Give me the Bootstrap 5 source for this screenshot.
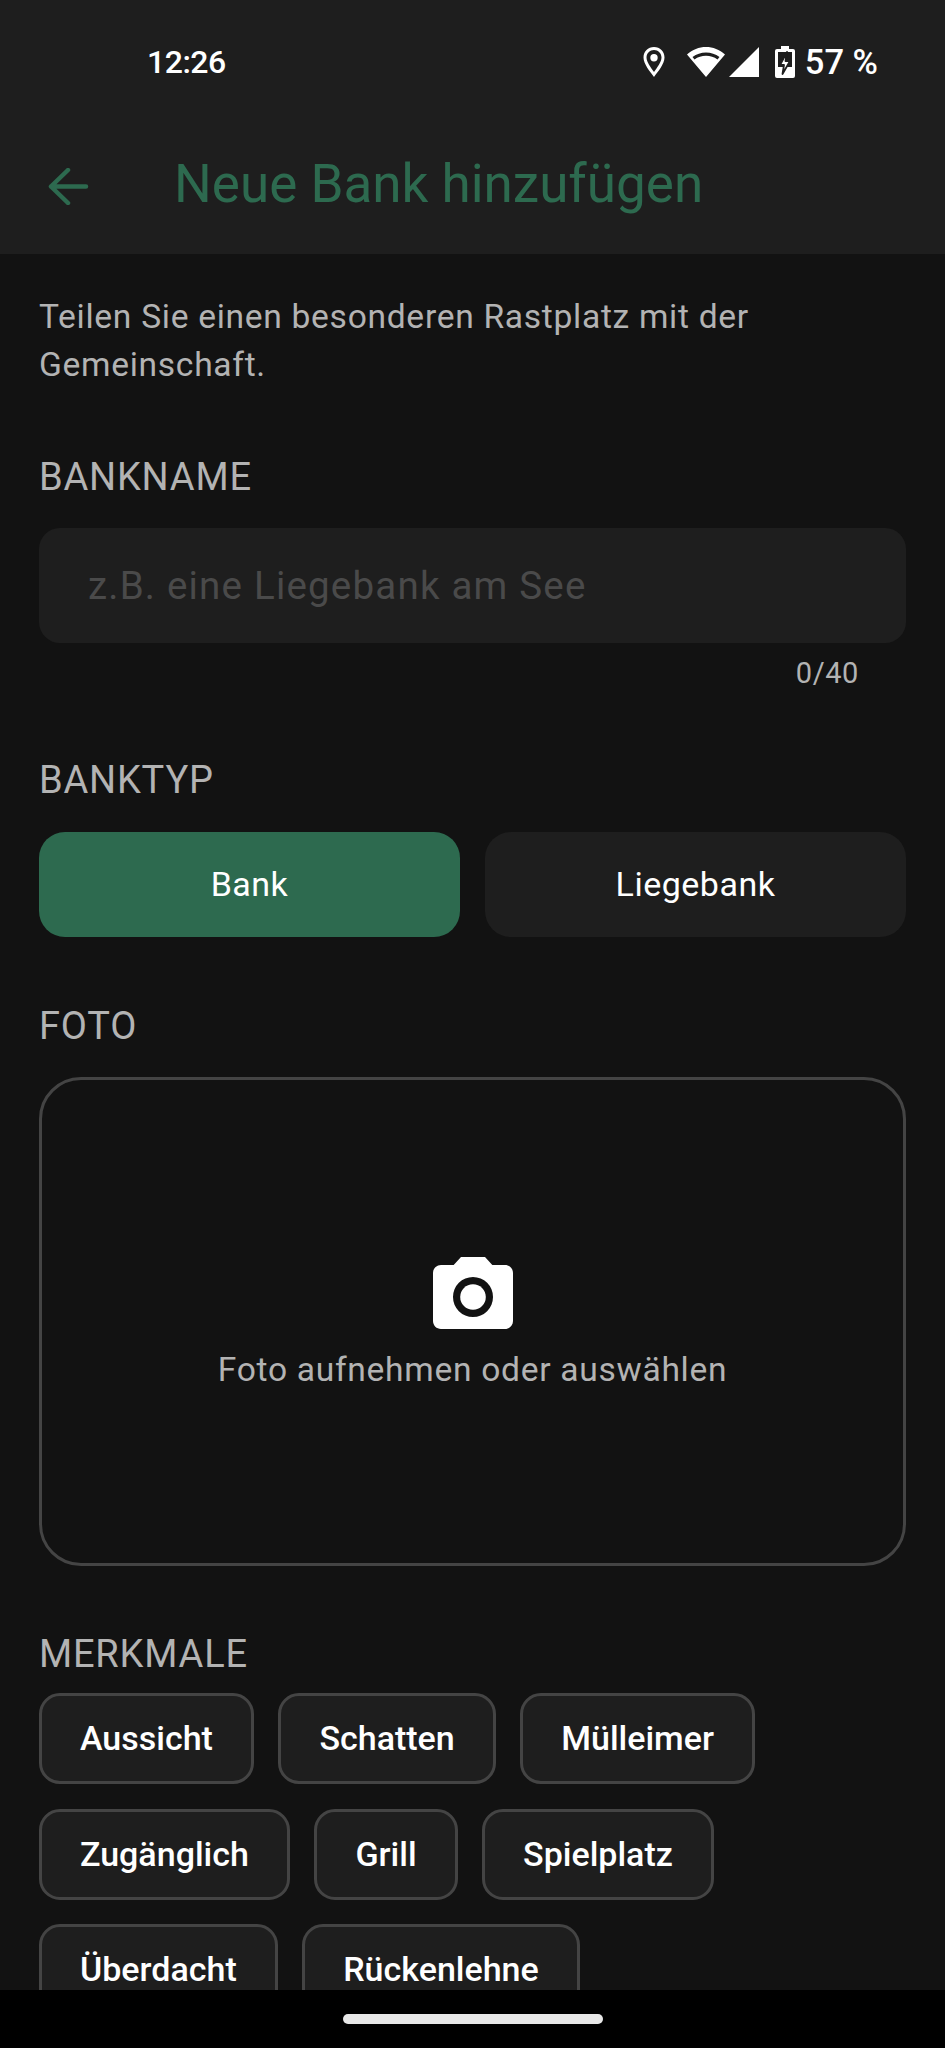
<!doctype html>
<html lang="de">
  <head>
    <meta charset="UTF-8" />
    <meta name="viewport" content="width=device-width, initial-scale=1.0" />
    <title>Neue Bank hinzufügen</title>
    <link rel="stylesheet" href="https://cdn.jsdelivr.net/npm/bootstrap@5.3.3/dist/css/bootstrap.min.css" />
    <style>
      html, body { height: 2048px; overflow: hidden; }
      body { background: #121212; font-family: Roboto, "Liberation Sans", sans-serif; color: #fff; }
      .kopf { background: #1e1e1e; height: 254px; }
      .statusbar { height: 124px; padding: 42px 67px 0 147px; }
      .uhrzeit { font-size: 32px; font-weight: 500; line-height: 40px; letter-spacing: -.5px; }
      .akku { font-size: 34.500px; font-weight: 500; line-height: 40px; }
      .status-icons svg { display: block; fill: #fff; }
      .appbar { height: 130px; padding: 0 0 5px 48px; }
      .appbar h1 { font-size: 53px; font-weight: 400; color: #2d6a4f; margin: 0 0 5px 85px; line-height: 62px; }
      .appbar path { fill: none; stroke: #2d6a4f; stroke-width: 4.500px; stroke-linecap: round; stroke-linejoin: round; }
      .inhalt { height: 1736px; padding: 39px 39px 0; overflow: hidden; }
      .intro { font-size: 33.6px; line-height: 48px; color: #b3b3b3; letter-spacing: .7px; margin: 0; }
      .feld-titel { font-size: 38px; line-height: 44px; color: #b3b3b3; letter-spacing: .8px; margin: 0; }
      .form-control.bank-name { background: #1e1e1e; border: 0; border-radius: 21px; height: 115px; padding: 0 49px; font-size: 38.5px; color: #fff; letter-spacing: 1.2px; }
      .bank-name::placeholder { color: #4a4a4a; opacity: 1; }
      .zaehler { font-size: 29px; line-height: 34px; color: #b3b3b3; padding-right: 47px; letter-spacing: .6px; }
      .typ-btn { flex: 1 1 0; height: 105px; border: 0; border-radius: 26px; background: #1e1e1e; color: #fff; font-size: 34px; letter-spacing: .5px; }
      .typ-btn.aktiv, .typ-btn.aktiv:hover { background: #2d6a4f; color: #fff; }
      .foto-feld { height: 489px; border: 3px solid #444; border-radius: 42px; }
      .foto-feld svg { fill: #fff; display: block; margin-top: -4px; }
      .foto-text { font-size: 33.6px; line-height: 40px; color: #b3b3b3; letter-spacing: .7px; margin-top: 5px; }
      .chips { gap: 24.500px; }
      .chip-btn { height: 91px; padding: 0 38px; border: 3px solid #444; border-radius: 21px; background: #1e1e1e; color: #fff; font-size: 34px; font-weight: 500; }
      .navleiste { height: 58px; background: #000; }
      .griff { width: 260px; height: 10px; border-radius: 5px; background: #e8e8e8; }
    </style>
  </head>
  <body>
    <header class="kopf">
      <div class="statusbar d-flex justify-content-between align-items-start">
        <span class="uhrzeit">12:26</span>
        <div class="status-icons d-flex align-items-center">
          <svg width="22" height="30" viewBox="0 0 22 30" style="margin-right:22px"><path fill-rule="evenodd" d="M11 0C5 0 .5 4.600.5 10.500.5 17 7 24.500 11 30c4-5.500 10.500-13 10.500-19.500C21.500 4.600 17 0 11 0zm0 3c4.200 0 7.500 3.300 7.500 7.500 0 4.300-4.300 10-7.500 14.500-3.200-4.500-7.500-10.200-7.500-14.500C3.500 6.300 6.800 3 11 3zm0 4a3.700 3.700 0 1 0 0 7.400A3.700 3.700 0 0 0 11 7z"/></svg>
          <svg width="38" height="30" viewBox="0 0 38 30" class="me-1"><path fill-rule="evenodd" d="M19 0C12 0 5.500 2.500 0 7.500L19 30 38 7.500C32.500 2.500 26 0 19 0zm0 5.500c5 0 9.500 1.600 13.500 4.600l-2 2.300c-3.300-2.400-7.300-3.700-11.500-3.700s-8.200 1.300-11.500 3.700l-2-2.300c4-3 8.500-4.600 13.500-4.600z"/></svg>
          <svg width="30" height="30" viewBox="0 0 30 30" class="me-3"><path d="M30 0v30H0z"/></svg>
          <svg width="20" height="32" viewBox="0 0 20 32" style="margin-right:10px">
            <path d="M6 0h8v3h4a2 2 0 0 1 2 2v25a2 2 0 0 1-2 2H2a2 2 0 0 1-2-2V5a2 2 0 0 1 2-2h4z"/>
            <rect x="3" y="6" width="14" height="15" fill="#1e1e1e"/>
            <path d="M12 6 5 19h4l-1.500 9L15 15h-4.500z" stroke="#1e1e1e" stroke-width="1.800" stroke-linejoin="round"/>
          </svg>
          <span class="akku">57 %</span>
        </div>
      </div>
      <div class="appbar d-flex align-items-center">
        <svg width="41" height="37" viewBox="0 0 41 37"><path d="M38 18.500H3M20 2 3 18.500 20 35"/></svg>
        <h1>Neue Bank hinzufügen</h1>
      </div>
    </header>

    <main class="inhalt">
      <p class="intro">Teilen Sie einen besonderen Rastplatz mit der Gemeinschaft.</p>

      <h2 class="feld-titel fw-normal" style="margin-top:66px">BANKNAME</h2>
      <input class="form-control bank-name" style="margin-top:29px" type="text" placeholder="z.B. eine Liegebank am See" />
      <div class="zaehler text-end" style="margin-top:13px">0/40</div>

      <h2 class="feld-titel fw-normal" style="margin-top:68px">BANKTYP</h2>
      <div class="d-flex" style="gap:25px;margin-top:30px">
        <button type="button" class="btn typ-btn aktiv">Bank</button>
        <button type="button" class="btn typ-btn">Liegebank</button>
      </div>

      <h2 class="feld-titel fw-normal" style="margin-top:67px">FOTO</h2>
      <div class="foto-feld d-flex flex-column align-items-center justify-content-center" style="margin-top:29px">
        <svg width="96" height="96" viewBox="0 0 24 24"><path fill-rule="evenodd" d="M9 2 7.170 4H4c-1.100 0-2 .9-2 2v12c0 1.100.9 2 2 2h16c1.100 0 2-.9 2-2V6c0-1.100-.9-2-2-2h-3.170L15 2H9zm3 5a5 5 0 1 1 0 10 5 5 0 0 1 0-10z"/><circle cx="12" cy="12" r="3.200"/></svg>
        <div class="foto-text">Foto aufnehmen oder auswählen</div>
      </div>

      <h2 class="feld-titel fw-normal" style="margin-top:66px">MERKMALE</h2>
      <div class="chips d-flex flex-wrap" style="margin-top:17px">
        <button type="button" class="btn chip-btn">Aussicht</button>
        <button type="button" class="btn chip-btn">Schatten</button>
        <button type="button" class="btn chip-btn">Mülleimer</button>
        <button type="button" class="btn chip-btn">Zugänglich</button>
        <button type="button" class="btn chip-btn">Grill</button>
        <button type="button" class="btn chip-btn">Spielplatz</button>
        <button type="button" class="btn chip-btn">Überdacht</button>
        <button type="button" class="btn chip-btn">Rückenlehne</button>
      </div>
    </main>

    <footer class="navleiste d-flex justify-content-center align-items-center">
      <div class="griff"></div>
    </footer>
    <script src="https://cdn.jsdelivr.net/npm/bootstrap@5.3.3/dist/js/bootstrap.bundle.min.js"></script>
  </body>
</html>
